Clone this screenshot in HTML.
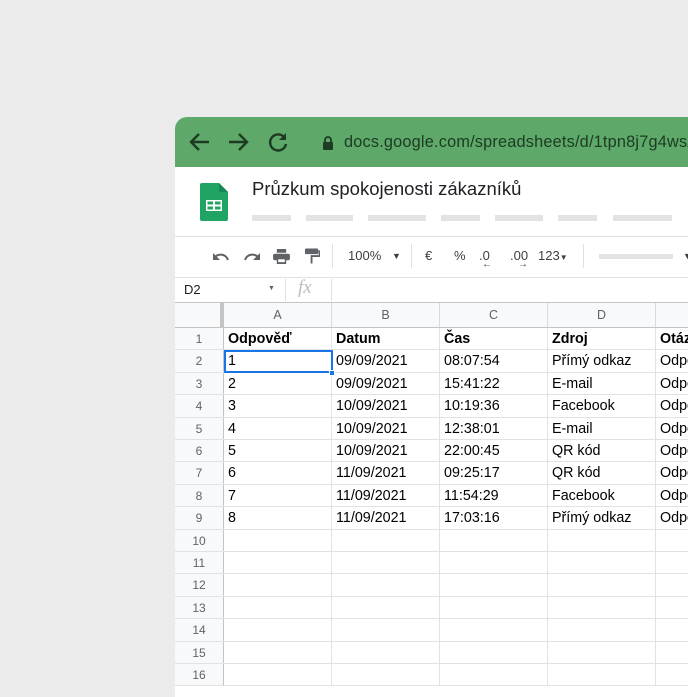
<!DOCTYPE html>
<html><head><meta charset="utf-8"><style>
*{margin:0;padding:0;box-sizing:border-box}
body{width:688px;height:688px;background:#ebebeb;position:relative;overflow:hidden;font-family:"Liberation Sans",Arial,sans-serif}
.win{position:absolute;left:175px;top:117px;width:520px;height:580px;background:#fff;border-radius:12px 0 0 0;overflow:hidden}
.bar{position:absolute;left:0;top:0;width:100%;height:50px;background:#5ea96a}
.url{position:absolute;left:169px;top:16px;font-size:16.3px;color:#1d3a22;white-space:nowrap;letter-spacing:0.2px}
.title{position:absolute;left:77px;top:61px;font-size:18.5px;color:#202124;white-space:nowrap}
.ph{position:absolute;top:98px;height:6px;background:#e3e3e6}
.hline{position:absolute;left:0;width:100%;height:1px;background:#e0e0e0}
.tb{position:absolute;top:131px;font-size:13px;color:#3c4043;white-space:nowrap}
.grid{position:absolute;left:0;top:186px;width:100%}
.row{position:absolute;left:0;width:100%;height:22.4px;border-bottom:1px solid #e2e2e2}
.rn{position:absolute;left:0;top:0;width:49px;height:100%;background:#f8f9fa;border-right:1px solid #c4c4c4;color:#5f6368;font-size:12px;text-align:center;line-height:22px}
.c{position:absolute;top:0;height:100%;border-right:1px solid #e2e2e2;font-size:14.3px;color:#000;line-height:23px;padding-left:4px;white-space:nowrap;overflow:hidden}
.a{left:49px;width:108px}.b{left:157px;width:108px}.cc{left:265px;width:108px}.d{left:373px;width:108px}.e{left:481px;width:60px}
.hdr .c{background:#f8f9fa;color:#5f6368;font-size:12.5px;text-align:center;padding:0;border-right:1px solid #dadada}
b{font-weight:bold}
</style></head><body>
<div class="win">
 <div class="bar">
  <svg style="position:absolute;left:14px;top:15px" width="22" height="20" viewBox="0 0 22 20"><path d="M20 10H3M10 2L2 10l8 8" stroke="#1d3a22" stroke-width="2.4" fill="none"/></svg>
  <svg style="position:absolute;left:52px;top:15px" width="22" height="20" viewBox="0 0 22 20"><path d="M2 10h17M12 2l8 8-8 8" stroke="#1d3a22" stroke-width="2.4" fill="none"/></svg>
  <svg style="position:absolute;left:92px;top:14px" width="22" height="22" viewBox="0 0 22 22"><path d="M17 6A8 8 0 1 0 19 13" stroke="#1d3a22" stroke-width="2.4" fill="none"/><path d="M19 2v7h-7z" fill="#1d3a22"/></svg>
  <svg style="position:absolute;left:147px;top:18px" width="12" height="15" viewBox="0 0 12 15"><path d="M3 7V5a3 3 0 0 1 6 0v2" stroke="#1d3a22" stroke-width="1.8" fill="none"/><rect x="1" y="7" width="10" height="8" rx="1" fill="#1d3a22"/></svg>
  <div class="url">docs.google.com/spreadsheets/d/1tpn8j7g4wsAt</div>
 </div>
 <svg style="position:absolute;left:25px;top:66px" width="28" height="38" viewBox="0 0 28 38"><path d="M2 0h17l9 9v27a2 2 0 0 1-2 2H2a2 2 0 0 1-2-2V2a2 2 0 0 1 2-2z" fill="#1fa463"/><path d="M19 0v9h9z" fill="#168a52"/><rect x="6" y="17" width="16" height="11" fill="#fff"/><rect x="7.5" y="18.5" width="5.5" height="3" fill="#1fa463"/><rect x="15" y="18.5" width="5.5" height="3" fill="#1fa463"/><rect x="7.5" y="23.5" width="5.5" height="3" fill="#1fa463"/><rect x="15" y="23.5" width="5.5" height="3" fill="#1fa463"/></svg>
 <div class="title">Průzkum spokojenosti zákazníků</div>
 <div class="ph" style="left:77px;width:39px"></div><div class="ph" style="left:131px;width:47px"></div><div class="ph" style="left:193px;width:58px"></div><div class="ph" style="left:266px;width:39px"></div><div class="ph" style="left:320px;width:48px"></div><div class="ph" style="left:383px;width:39px"></div><div class="ph" style="left:438px;width:59px"></div>
 <div class="hline" style="top:119px"></div>
 <svg style="position:absolute;left:37px;top:133px" width="18" height="12" viewBox="0 0 18 12"><path d="M16 10C14 4 7 3 3 7" stroke="#5f6368" stroke-width="2" fill="none"/><path d="M1 3v7h7z" fill="#5f6368"/></svg>
 <svg style="position:absolute;left:68px;top:133px" width="18" height="12" viewBox="0 0 18 12"><path d="M2 10C4 4 11 3 15 7" stroke="#5f6368" stroke-width="2" fill="none"/><path d="M17 3v7h-7z" fill="#5f6368"/></svg>
 <svg style="position:absolute;left:98px;top:132px" width="17" height="15" viewBox="0 0 18 16"><rect x="4" y="0" width="10" height="4" fill="#5f6368"/><rect x="0" y="5" width="18" height="7" rx="2" fill="#5f6368"/><rect x="4" y="10" width="10" height="6" fill="#5f6368"/><rect x="5.5" y="11" width="7" height="3" fill="#fff"/></svg>
 <svg style="position:absolute;left:130px;top:131px" width="15" height="17" viewBox="0 0 16 17"><rect x="0" y="0" width="14" height="6" rx="1" fill="#5f6368"/><path d="M14 3h1.5v5H7v8" stroke="#5f6368" stroke-width="2" fill="none"/></svg>
 <div style="position:absolute;left:157px;top:127px;width:1px;height:24px;background:#e0e0e0"></div>
 <div class="tb" style="left:173px">100%</div>
 <div class="tb" style="left:217px;font-size:9px;top:134px">▼</div>
 <div style="position:absolute;left:236px;top:127px;width:1px;height:24px;background:#e0e0e0"></div>
 <div class="tb" style="left:250px">€</div>
 <div class="tb" style="left:279px">%</div>
 <div class="tb" style="left:304px">.0</div><div class="tb" style="left:307px;top:142px;font-size:10px">←</div>
 <div class="tb" style="left:335px">.00</div><div class="tb" style="left:343px;top:142px;font-size:10px">→</div>
 <div class="tb" style="left:363px">123<span style="font-size:8px">▼</span></div>
 <div style="position:absolute;left:408px;top:127px;width:1px;height:24px;background:#e0e0e0"></div>
 <div style="position:absolute;left:424px;top:137px;width:74px;height:5px;background:#e3e3e6"></div>
 <div class="tb" style="left:508px;font-size:9px;top:134px">▼</div>
 <div class="hline" style="top:160px"></div>
 <div style="position:absolute;left:9px;top:165px;font-size:13px;color:#202124">D2</div>
 <div style="position:absolute;left:93px;top:168px;font-size:7px;color:#5f6368">▼</div>
 <div style="position:absolute;left:110px;top:162px;width:1px;height:22px;background:#e0e0e0"></div>
 <div style="position:absolute;left:123px;top:160px;font-size:19px;color:#bdbdbd;font-family:'Liberation Serif',serif;font-style:italic">fx</div>
 <div style="position:absolute;left:156px;top:162px;width:1px;height:22px;background:#e0e0e0"></div>
 <div class="hline" style="top:185px;background:#c4c4c4"></div>
 <div class="grid">
  <div class="row hdr" style="top:0;height:25px;border-bottom:1px solid #c4c4c4"><div class="rn" style="border-right:4px solid #c4c4c4"></div><div class="c a" style="line-height:24px">A</div><div class="c b" style="line-height:24px">B</div><div class="c cc" style="line-height:24px">C</div><div class="c d" style="line-height:24px">D</div><div class="c e"></div></div>
 </div>
 <div class="grid" style="top:211px">
  <div class="row" style="top:0"><div class="rn">1</div><div class="c a"><b>Odpověď</b></div><div class="c b"><b>Datum</b></div><div class="c cc"><b>Čas</b></div><div class="c d"><b>Zdroj</b></div><div class="c e"><b>Otázka</b></div></div>
  <div class="row" style="top:22.4px"><div class="rn">2</div><div class="c a">1</div><div class="c b">09/09/2021</div><div class="c cc">08:07:54</div><div class="c d">Přímý odkaz</div><div class="c e">Odpověď</div></div>
  <div class="row" style="top:44.8px"><div class="rn">3</div><div class="c a">2</div><div class="c b">09/09/2021</div><div class="c cc">15:41:22</div><div class="c d">E-mail</div><div class="c e">Odpověď</div></div>
  <div class="row" style="top:67.2px"><div class="rn">4</div><div class="c a">3</div><div class="c b">10/09/2021</div><div class="c cc">10:19:36</div><div class="c d">Facebook</div><div class="c e">Odpověď</div></div>
  <div class="row" style="top:89.6px"><div class="rn">5</div><div class="c a">4</div><div class="c b">10/09/2021</div><div class="c cc">12:38:01</div><div class="c d">E-mail</div><div class="c e">Odpověď</div></div>
  <div class="row" style="top:112px"><div class="rn">6</div><div class="c a">5</div><div class="c b">10/09/2021</div><div class="c cc">22:00:45</div><div class="c d">QR kód</div><div class="c e">Odpověď</div></div>
  <div class="row" style="top:134.4px"><div class="rn">7</div><div class="c a">6</div><div class="c b">11/09/2021</div><div class="c cc">09:25:17</div><div class="c d">QR kód</div><div class="c e">Odpověď</div></div>
  <div class="row" style="top:156.8px"><div class="rn">8</div><div class="c a">7</div><div class="c b">11/09/2021</div><div class="c cc">11:54:29</div><div class="c d">Facebook</div><div class="c e">Odpověď</div></div>
  <div class="row" style="top:179.2px"><div class="rn">9</div><div class="c a">8</div><div class="c b">11/09/2021</div><div class="c cc">17:03:16</div><div class="c d">Přímý odkaz</div><div class="c e">Odpověď</div></div>
  <div class="row" style="top:201.6px"><div class="rn">10</div><div class="c a"></div><div class="c b"></div><div class="c cc"></div><div class="c d"></div><div class="c e"></div></div>
  <div class="row" style="top:224px"><div class="rn">11</div><div class="c a"></div><div class="c b"></div><div class="c cc"></div><div class="c d"></div><div class="c e"></div></div>
  <div class="row" style="top:246.4px"><div class="rn">12</div><div class="c a"></div><div class="c b"></div><div class="c cc"></div><div class="c d"></div><div class="c e"></div></div>
  <div class="row" style="top:268.8px"><div class="rn">13</div><div class="c a"></div><div class="c b"></div><div class="c cc"></div><div class="c d"></div><div class="c e"></div></div>
  <div class="row" style="top:291.2px"><div class="rn">14</div><div class="c a"></div><div class="c b"></div><div class="c cc"></div><div class="c d"></div><div class="c e"></div></div>
  <div class="row" style="top:313.6px"><div class="rn">15</div><div class="c a"></div><div class="c b"></div><div class="c cc"></div><div class="c d"></div><div class="c e"></div></div>
  <div class="row" style="top:336px"><div class="rn">16</div><div class="c a"></div><div class="c b"></div><div class="c cc"></div><div class="c d"></div><div class="c e"></div></div>
  <div style="position:absolute;left:49px;top:22px;width:109px;height:23.4px;border:2px solid #1a73e8"></div>
  <div style="position:absolute;left:154px;top:42px;width:6px;height:6px;background:#1a73e8;border:1px solid #fff"></div>
 </div>
</div>
</body></html>
